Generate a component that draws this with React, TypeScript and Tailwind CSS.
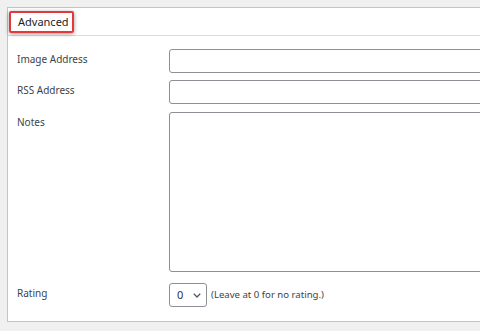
export default function App() {
  return (
    <div className="w-[480px] h-[331px] overflow-hidden bg-[#f0f0f1] pt-[7px] pl-[7px] font-['Noto_Sans',sans-serif]">
      <div className="w-[520px] h-[315px] bg-white border border-[#c3c4c7]">
        {/* header */}
        <div className="h-[28px] border-b border-[#dcdcde] pt-[3px] pl-[1px]">
          <div className="w-[65px] h-[22px] border-2 border-[#e5383b] rounded-[2px] shadow-[0_1px_4px_rgba(0,0,0,0.4)] pl-[7px] text-[11px] leading-[18px] text-[#1d2327]">
            Advanced
          </div>
        </div>
        {/* form */}
        <div className="flex flex-col pt-[13px] text-[10px] text-[#3c434a]">
          <div className="flex flex-row items-start h-[24px]">
            <div className="w-[161px] pl-[9px] pt-[3px] leading-[14px]">Image Address</div>
            <div className="flex-1 h-[24px] border border-[#8c8f94] rounded-[3px]" />
          </div>
          <div className="flex flex-row items-start h-[24px] mt-[7px]">
            <div className="w-[161px] pl-[9px] pt-[3px] leading-[14px]">RSS Address</div>
            <div className="flex-1 h-[24px] border border-[#8c8f94] rounded-[3px]" />
          </div>
          <div className="flex flex-row items-start h-[160px] mt-[8px]">
            <div className="w-[161px] pl-[9px] pt-[3px] leading-[14px]">Notes</div>
            <div className="flex-1 h-[160px] border border-[#8c8f94] rounded-[3px]" />
          </div>
          <div className="flex flex-row items-start h-[24px] mt-[11px]">
            <div className="w-[161px] pl-[9px] pt-[3px] leading-[14px]">Rating</div>
            <div className="w-[38px] h-[24px] border border-[#8c8f94] rounded-[3px] flex flex-row items-center pl-[7px] pr-[5px] justify-between text-[#2c3338]">
              <span className="text-[11px]">0</span>
              <svg width="8" height="5" viewBox="0 0 8 5" fill="none" stroke="#50575e" strokeWidth="1.3">
                <path d="M0.8 0.8 L4 4 L7.2 0.8" />
              </svg>
            </div>
            <span className="ml-[4px] pt-[5px] leading-[14px] text-[9.6px] text-[#3c434a]">(Leave at 0 for no rating.)</span>
          </div>
        </div>
      </div>
    </div>
  );
}
